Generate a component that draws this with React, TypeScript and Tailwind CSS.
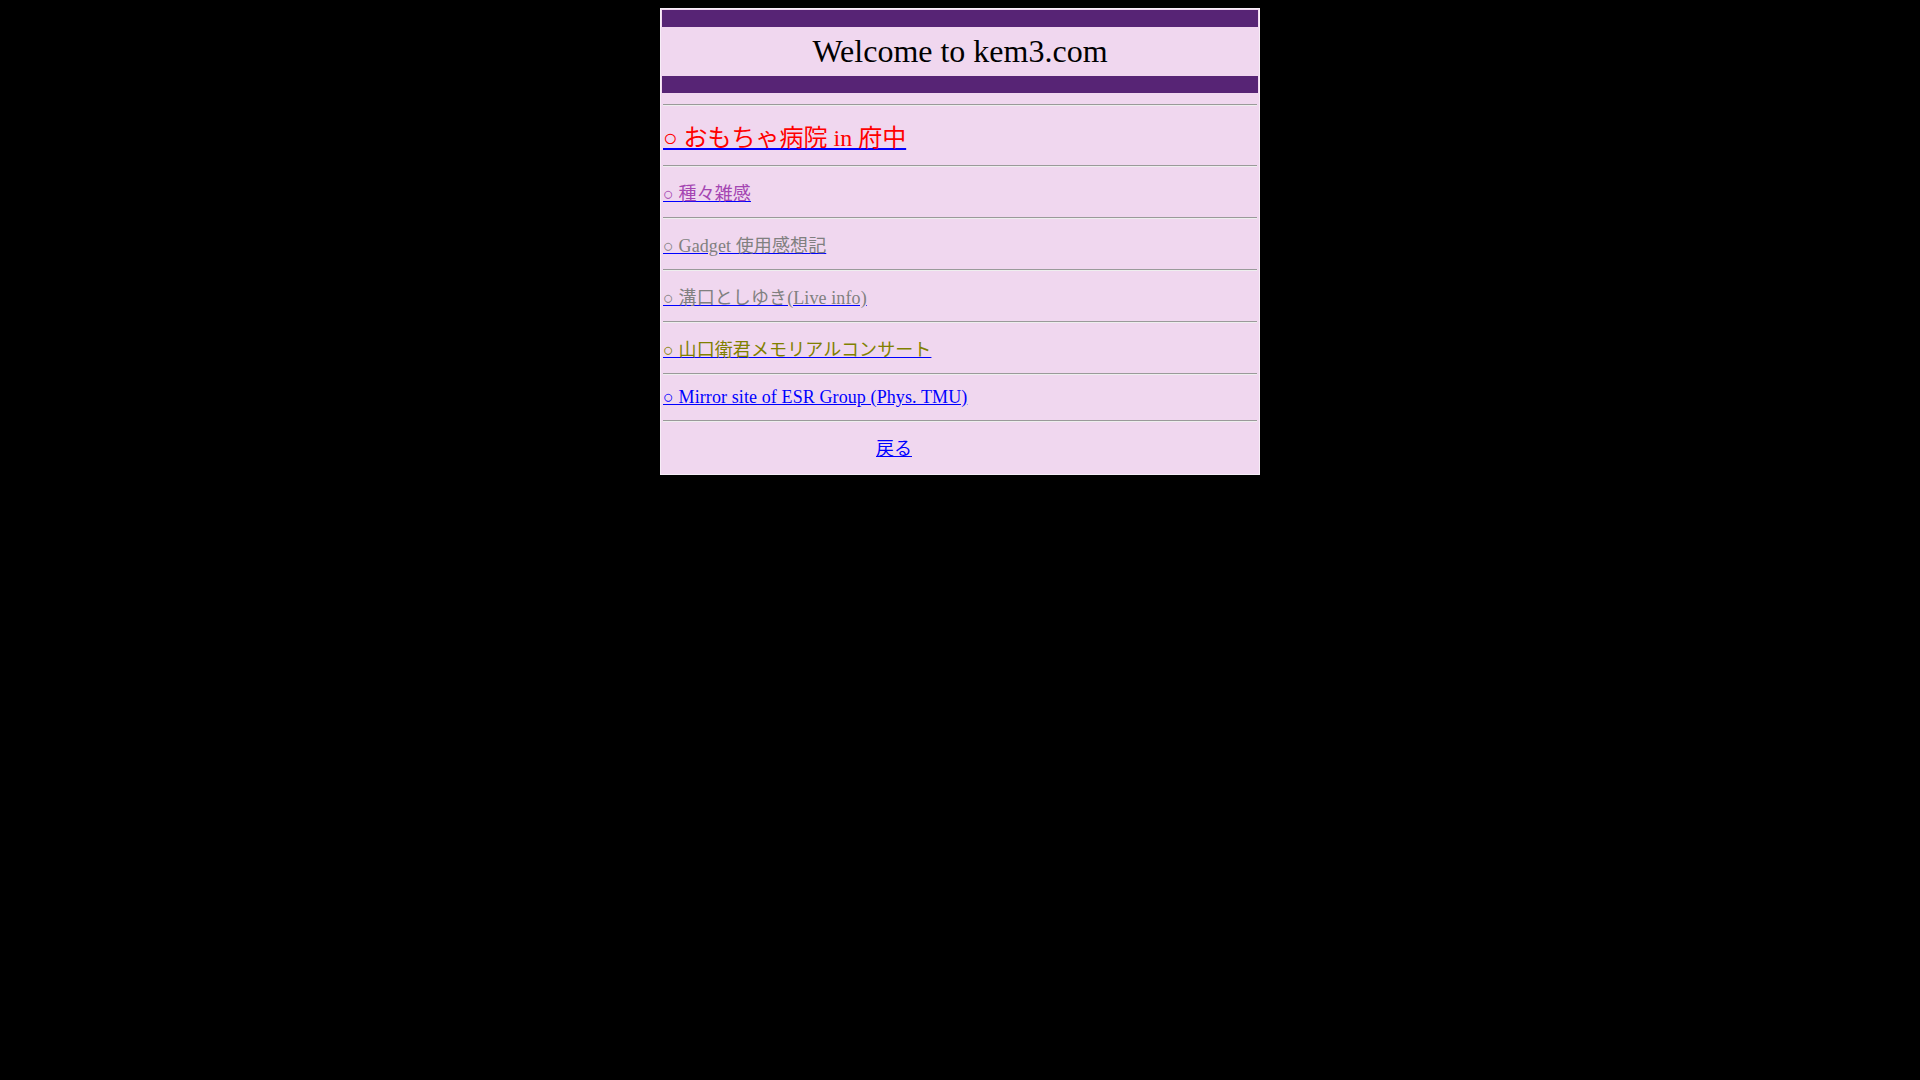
import React from "react";

const Hr = () => (
  <div className="h-0 border-t border-b border-t-[#9a9a9a] border-b-[#eeeeee] mx-px" />
);

type LinkRow = {
  text: string;
  color: string;
  size: string;
  h: string;
  pt: string;
  lead: string;
};

const rows: LinkRow[] = [
  { text: "○ おもちゃ病院 in 府中", color: "text-[#ff0000]", size: "text-[24px]", h: "h-[59px]", pt: "pt-[19px]", lead: "leading-[27px]" },
  { text: "○ 種々雑感", color: "text-[#a445b2]", size: "text-[18px] tracking-[0.1px]", h: "h-[50px]", pt: "pt-[16px]", lead: "leading-[20px]" },
  { text: "○ Gadget 使用感想記", color: "text-[#808080]", size: "text-[18px] tracking-[0.1px]", h: "h-[50px]", pt: "pt-[16px]", lead: "leading-[20px]" },
  { text: "○ 溝口としゆき(Live info)", color: "text-[#808080]", size: "text-[18px] tracking-[0.1px]", h: "h-[50px]", pt: "pt-[16px]", lead: "leading-[20px]" },
  { text: "○ 山口衛君メモリアルコンサート", color: "text-[#808000]", size: "text-[18px] tracking-[0.1px]", h: "h-[50px]", pt: "pt-[16px]", lead: "leading-[20px]" },
  { text: "○ Mirror site of ESR Group (Phys. TMU)", color: "text-[#0000ff]", size: "text-[18px] tracking-[0.1px]", h: "h-[45px]", pt: "pt-[11px]", lead: "leading-[20px]" },
];

export default function App() {
  return (
    <div
      className="min-h-screen bg-black pt-2"
      style={{ fontFamily: '"Liberation Serif", "Noto Sans CJK JP", serif' }}
    >
      <div className="mx-auto w-[600px] bg-[#f0d7ef] border border-[#f7eef7] p-px">
        <div className="h-[17px] bg-[#572475]" />
        <div className="h-[49px] flex items-center justify-center">
          <span className="text-[32px] leading-[37px] text-black">Welcome to kem3.com</span>
        </div>
        <div className="h-[17px] bg-[#572475]" />
        <div className="h-[11px]" />
        <Hr />
        {rows.map((r) => (
          <React.Fragment key={r.text}>
            <div className={`${r.h} ${r.pt} px-px`}>
              <a href="#" className={`text-[#0000ff] underline ${r.size} ${r.lead}`}>
                <span className={r.color}>{r.text}</span>
              </a>
            </div>
            <Hr />
          </React.Fragment>
        ))}
        <div className="h-[51px] pt-[16px] pl-[214px]">
          <a href="#" className="text-[#0000ff] underline text-[18px] leading-[20px]">
            戻る
          </a>
        </div>
      </div>
    </div>
  );
}
